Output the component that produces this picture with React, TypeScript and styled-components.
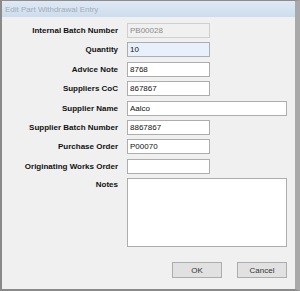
import * as React from 'react';
import styled, { createGlobalStyle } from 'styled-components';

const GlobalStyle = createGlobalStyle`
    html, body {
        margin: 0;
        padding: 0;
        background: #f0f0f0;
    }
    * {
        box-sizing: border-box;
    }
`

const Window = styled.div`
    width: 300px;
    height: 291px;
    display: flex;
    flex-direction: column;
    background-color: #f0f0f0;
    border-top: 1px solid #8c8c8c;
    border-left: 2px solid #8a8a8a;
    border-bottom: 2px solid #8a8a8a;
    border-right: 5px solid #a9a9a9;
    font-family: "Liberation Sans", Arial, sans-serif;
`

const TitleBar = styled.div`
    height: 16px;
    display: flex;
    align-items: center;
    padding-left: 3px;
    background: linear-gradient(#dfe9f5, #cddcec);
    color: #a3adb8;
    font-size: 8px;
`

const Body = styled.div`
    flex: 1;
    display: flex;
    flex-direction: column;
    padding: 6px 8px 0 0;
`

const Form = styled.div`
    display: grid;
    grid-template-columns: 116px 1fr;
    grid-template-rows: repeat(8, 15px) 69px;
    column-gap: 9px;
    row-gap: 4.375px;
`

const Label = styled.label<{ $top?: boolean }>`
    display: flex;
    justify-content: flex-end;
    align-items: ${props => props.$top ? 'flex-start' : 'center'};
    padding-top: ${props => props.$top ? '2px' : '0'};
    font-size: 8px;
    font-weight: bold;
    color: #111;
    white-space: nowrap;
`

const Field = styled.input<{ $wide?: boolean; $focused?: boolean }>`
    display: block;
    width: ${props => props.$wide ? '160px' : '83px'};
    height: 15px;
    margin: 0;
    padding: 0 2px;
    border: 1px solid #adadad;
    background-color: ${props => props.$focused ? '#e8f0fb' : '#fff'};
    font-family: "Liberation Sans", Arial, sans-serif;
    font-size: 8px;
    color: #111;
    outline: none;

    &:disabled {
        background-color: #f0f0f0;
        border-color: #cfcfcf;
        color: #8a8a8a;
    }
`

const Notes = styled.textarea`
    display: block;
    width: 160px;
    height: 69px;
    margin: 0;
    padding: 2px;
    border: 1px solid #adadad;
    background: #fff;
    resize: none;
    outline: none;
`

const ButtonRow = styled.div`
    display: flex;
    justify-content: flex-end;
    gap: 15px;
    margin-top: 15px;
`

const Button = styled.button`
    width: 50px;
    height: 16px;
    padding: 0;
    border: 1px solid #adadad;
    background-color: #e1e1e1;
    font-family: "Liberation Sans", Arial, sans-serif;
    font-size: 8px;
    color: #333;
`

const fields = [
    { label: 'Internal Batch Number', value: 'PB00028', disabled: true },
    { label: 'Quantity', value: '10', focused: true },
    { label: 'Advice Note', value: '8768' },
    { label: 'Suppliers CoC', value: '867867' },
    { label: 'Supplier Name', value: 'Aalco', wide: true },
    { label: 'Supplier Batch Number', value: '8867867' },
    { label: 'Purchase Order', value: 'P00070' },
    { label: 'Originating Works Order', value: '' },
]

export default function App() {
    return (
        <>
            <GlobalStyle />
            <Window>
                <TitleBar>Edit Part Withdrawal Entry</TitleBar>
                <Body>
                    <Form>
                        {fields.map(f => (
                            <React.Fragment key={f.label}>
                                <Label>{f.label}</Label>
                                <div>
                                    <Field
                                        defaultValue={f.value}
                                        disabled={f.disabled}
                                        $wide={f.wide}
                                        $focused={f.focused}
                                    />
                                </div>
                            </React.Fragment>
                        ))}
                        <Label $top>Notes</Label>
                        <div>
                            <Notes />
                        </div>
                    </Form>
                    <ButtonRow>
                        <Button>OK</Button>
                        <Button>Cancel</Button>
                    </ButtonRow>
                </Body>
            </Window>
        </>
    );
}
